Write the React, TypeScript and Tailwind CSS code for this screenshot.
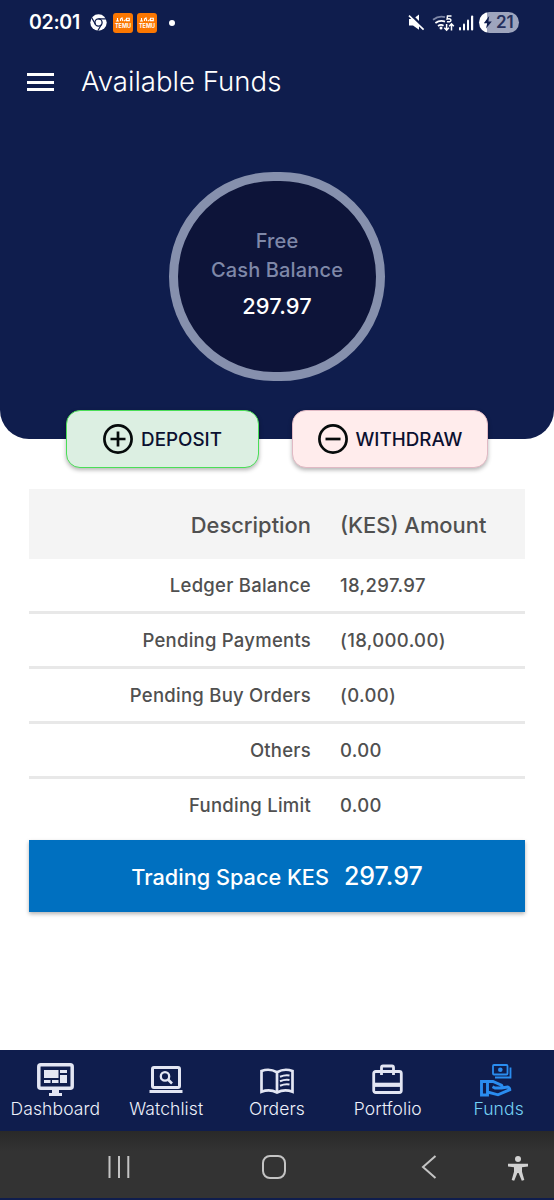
import { ReactNode } from "react";

type Row = { label: string; amount: string };

const rows: Row[] = [
  { label: "Ledger Balance", amount: "18,297.97" },
  { label: "Pending Payments", amount: "(18,000.00)" },
  { label: "Pending Buy Orders", amount: "(0.00)" },
  { label: "Others", amount: "0.00" },
  { label: "Funding Limit", amount: "0.00" },
];

function ChromeIcon() {
  return (
    <svg width="17" height="17" viewBox="0 0 17 17">
      <circle cx="8.5" cy="8.5" r="8.2" fill="#fff" />
      <circle cx="8.5" cy="8.5" r="3.6" fill="#fff" stroke="#0f1d4d" strokeWidth="1.3" />
      <path d="M8.5 4.9h7.6M5.4 10.3L1.8 3.9M11.6 10.3l-3.8 6.4" stroke="#0f1d4d" strokeWidth="1.2" />
    </svg>
  );
}

function TemuIcon() {
  return (
    <div className="flex h-5 w-5 flex-col items-center justify-center rounded-[3px] bg-[#fb7701]">
      <svg width="14" height="5" viewBox="0 0 14 5" stroke="#fff" fill="none" strokeWidth="1.1">
        <path d="M0 4h3M1.5 1v3M4.5 4V2l1.5-1 .8 3M8 4.2L9.8 2.6M10.5 1.2h2.8v2.4h-2.8z" />
      </svg>
      <span className="mt-px text-[5.5px] leading-[6px] font-bold text-white">TEMU</span>
    </div>
  );
}

function StatusBar() {
  return (
    <div className="flex h-[45px] items-center pr-[35px] pl-[29px] text-white">
      <span className="mt-px w-[53px] text-[19.5px] font-semibold tracking-[-0.3px]">02:01</span>
      <div className="ml-2 flex items-center">
        <ChromeIcon />
        <div className="ml-[6px] flex gap-1">
          <TemuIcon />
          <TemuIcon />
        </div>
        <div className="ml-3 h-[6px] w-[6px] rounded-full bg-white" />
      </div>
      <div className="ml-auto flex items-center">
        <svg width="17" height="17" viewBox="0 0 17 17">
          <path d="M1 5h4l6-4.4v15.2L5 11.4H1z" fill="#fff" />
          <path d="M2.2 0l15 15" stroke="#0f1d4d" strokeWidth="2.6" />
          <path d="M1 1.6l14.6 14" stroke="#fff" strokeWidth="1.7" />
        </svg>
        <svg className="ml-[7px]" width="23" height="18" viewBox="0 0 23 18" fill="none">
          <path d="M1 5.8Q7 1.2 13 3.2" stroke="#7f88a8" strokeWidth="1.8" />
          <path d="M3.4 9Q8 5.6 13 7.6" stroke="#fff" strokeWidth="1.8" />
          <path d="M6 12q3-2 5.5-.3" stroke="#fff" strokeWidth="1.8" />
          <circle cx="9" cy="14" r="1.5" fill="#fff" />
          <path d="M19.5 1.9h-4l-.4 3.2q3.8-.9 3.8 1.2 0 2-4 1.4" stroke="#fff" strokeWidth="1.5" />
          <path d="M14.6 10v6M12.3 13.8l2.3 2.4 2.3-2.4M19.5 16.5V10M17.2 12.2l2.3-2.4 2.3 2.4" stroke="#fff" strokeWidth="1.5" />
        </svg>
        <svg className="ml-1" width="15" height="16" viewBox="0 0 15 16" fill="#fff">
          <rect x="0" y="12" width="2" height="3.5" rx="1" />
          <rect x="4" y="8.5" width="2" height="7" rx="1" />
          <rect x="8" y="4.5" width="2" height="11" rx="1" />
          <rect x="12" y="0.5" width="2.2" height="15" rx="1" />
        </svg>
        <div className="ml-[5px] flex h-[21px] w-10 items-center overflow-hidden rounded-full bg-linear-to-r from-white from-20% to-[#9ea5bd] to-20%">
          <svg className="ml-1 shrink-0" width="10" height="13" viewBox="0 0 10 13">
            <path d="M6.2 0L.8 7.2h3.4L3 12.6l5.8-7.2H5.4z" fill="#0f1d4d" />
          </svg>
          <span className="ml-[3px] text-[17px] font-semibold text-[#25305c]">21</span>
        </div>
      </div>
    </div>
  );
}

function Header() {
  return (
    <header className="h-[439px] rounded-b-[29px] bg-[#0f1d4d]">
      <StatusBar />
      <div className="flex h-[74px] items-center pl-[27px]">
        <button className="flex w-[27px] flex-col gap-[4.5px]">
          <span className="h-[3px] bg-white" />
          <span className="h-[3px] bg-white" />
          <span className="h-[3px] bg-white" />
        </button>
        <h1 className="ml-[27px] text-[27.6px] font-light text-white">Available Funds</h1>
      </div>
      <div className="mx-auto mt-[53px] flex h-[209px] w-[216px] flex-col items-center rounded-full border-9 border-[#8690ad] bg-[#0d1439] pt-[46px] text-[20px] leading-[29px] font-medium tracking-[0.15px] text-[#7f88a8]">
        <span>Free</span>
        <span>Cash Balance</span>
        <span className="mt-[7px] text-[21.8px] text-white">297.97</span>
      </div>
    </header>
  );
}

function RoundIcon({ d }: { d: string }) {
  return (
    <svg width="30" height="30" viewBox="0 0 30 30" fill="none" stroke="#060b0b" strokeWidth="2.7">
      <circle cx="15" cy="15" r="13.6" />
      <path d={d} />
    </svg>
  );
}

function Actions() {
  return (
    <div className="relative -mt-[29px] flex h-[58px] justify-between pr-[66px] pl-[66px] text-[18.8px] font-medium text-[#0b1030]">
      <button className="flex w-[193px] items-center justify-center gap-2 rounded-[14px] border border-[#4ade57] bg-[#dcefe2] shadow-[0_2px_4px_rgba(0,0,0,0.3)]">
        <RoundIcon d="M15 7.5v15M7.5 15h15" />
        <span className="pt-[2px]">DEPOSIT</span>
      </button>
      <button className="flex w-[196px] items-center justify-center gap-2 rounded-[14px] border border-[#e0b9c4] bg-[#ffecec] shadow-[0_2px_4px_rgba(0,0,0,0.3)]">
        <RoundIcon d="M7.5 15h15" />
        <span className="pt-[2px]">WITHDRAW</span>
      </button>
    </div>
  );
}

function FundsTable() {
  return (
    <div className="mx-[29px] mt-[21px] font-medium text-[#505050]">
      <div className="flex h-[70px] items-center gap-[29px] bg-[#f4f4f4] pt-[2px] text-[21.9px]">
        <span className="w-[282px] text-right">Description</span>
        <span>(KES) Amount</span>
      </div>
      {rows.map((row) => (
        <div
          key={row.label}
          className="flex h-[55px] items-center gap-[29px] border-b-3 border-[#e8e8e8] pt-[2px] text-[18.5px] tracking-[0.25px] last:border-transparent"
        >
          <span className="w-[282px] text-right">{row.label}</span>
          <span className="tracking-[0.35px]">{row.amount}</span>
        </div>
      ))}
    </div>
  );
}

function NavItem({ label, active, children }: { label: string; active?: boolean; children: ReactNode }) {
  return (
    <a className={active ? "flex flex-col items-center text-[#74d0f4]" : "flex flex-col items-center text-[#eef1fb]"}>
      <div className="flex h-[37px] items-end justify-center">{children}</div>
      <span className="mt-[7px] text-[17.5px] leading-6 font-light tracking-[0.1px]">{label}</span>
    </a>
  );
}

function BottomNav() {
  return (
    <nav className="grid h-[81px] grid-cols-5 bg-[#0f1d4d] pt-[3px]">
      <NavItem label="Dashboard">
        <svg className="-mb-[7px]" width="37" height="34" viewBox="0 0 37 34" fill="#e3e6f3">
          <rect x="1.8" y="1.8" width="33.4" height="23.4" rx="2" fill="none" stroke="#e3e6f3" strokeWidth="3.5" />
          <path d="M7 7h14.5v8H7zM23 7h7v3h-7zM23 12h7v8h-7zM7 17h6.5v3H7zM15 17h6.5v3H15zM15 26h7v4h3v3H12v-3h3z" />
        </svg>
      </NavItem>
      <NavItem label="Watchlist">
        <svg className="-mb-1" width="34" height="29" viewBox="0 0 34 29" fill="none" stroke="#e3e6f3" strokeWidth="3">
          <rect x="3.5" y="2.5" width="27" height="20" rx="1.5" />
          <path d="M.5 26.4h33" />
          <circle cx="16" cy="11.4" r="4.2" strokeWidth="2.3" />
          <path d="M19 14.5l4 4" strokeWidth="2.6" />
        </svg>
      </NavItem>
      <NavItem label="Orders">
        <svg className="-mb-[5px]" width="34" height="27" viewBox="0 0 34 27" fill="none" stroke="#e3e6f3" strokeWidth="2.7">
          <path d="M17 4.2Q9.5 0 1.5 3v20.8Q9.5 20.7 17 24.5Q24.5 20.7 32.5 23.8V3Q24.5 0 17 4.2zM17 4.2v20.3" />
          <path d="M20 8.7q5-2 9.5-1.2M20 13.2q5-2 9.5-1.2M20 17.7q5-2 9.5-1.2" strokeWidth="2" />
        </svg>
      </NavItem>
      <NavItem label="Portfolio">
        <svg className="-mb-1" width="31" height="30" viewBox="0 0 31 30" fill="none" stroke="#e3e6f3" strokeWidth="2.8">
          <rect x="1.7" y="7.5" width="27.6" height="21" rx="2" />
          <path d="M9.5 11V3.5q0-1.5 1.5-1.5h9q1.5 0 1.5 1.5V11" />
          <path d="M2 20.8h27" strokeWidth="4.2" />
        </svg>
      </NavItem>
      <NavItem label="Funds" active>
        <svg className="mr-[5px] -mb-[7px]" width="32" height="34" viewBox="0 0 32 34" fill="none" stroke="#2a8df0" strokeWidth="1.8">
          <rect x="13" y="2" width="14.5" height="9.5" rx="1" />
          <path d="M30.5 4.5v10H15" />
          <circle cx="20.3" cy="6.8" r="2.3" fill="#2a8df0" stroke="none" />
          <path d="M1.5 18.500h6v13.500h-6zM7.500 18.500h5.500l8.500 3.800q1.300 1.500-.5 2.700h-6l-2.500-1.200M21.500 25l6-1q2.300.6 2.300 2.700L18 31.800 7.500 29" strokeWidth="2.9" />
        </svg>
      </NavItem>
    </nav>
  );
}

function SystemNav() {
  return (
    <div className="flex h-[67px] items-center bg-linear-to-b from-[#292929] to-[#333333] to-30% pt-[4px]">
      <svg className="ml-[108px]" width="22" height="22" viewBox="0 0 22 22" stroke="#c4c4c4" strokeWidth="2">
        <path d="M1.5 0v22M11 0v22M20.3 0v22" />
      </svg>
      <div className="ml-[132px] h-6 w-6 rounded-[8px] border-2 border-[#c4c4c4]" />
      <svg className="ml-[135px]" width="16" height="24" viewBox="0 0 16 24" fill="none" stroke="#c4c4c4" strokeWidth="2">
        <path d="M14.5 1L2 12l12.5 11" />
      </svg>
      <svg className="mt-1 ml-[71px]" width="20" height="25" viewBox="0 0 20 25" fill="#d2d2d2">
        <circle cx="10" cy="3" r="3" />
        <path d="M0 7.8h20v2.6l-6 .8v4.5l2.3 8.3-2.5.8L10.600 17H9.400l-3.200 7.800-2.500-.8L6 15.700v-4.500l-6-.8z" />
      </svg>
    </div>
  );
}

function App() {
  return (
    <div className="flex h-[1200px] w-[554px] flex-col overflow-hidden bg-white font-['Inter',sans-serif]">
      <Header />
      <Actions />
      <FundsTable />
      <div className="mx-[29px] mt-[6px] flex h-[72px] items-baseline justify-center gap-[15px] bg-[#0070c0] pt-[18px] font-medium text-white shadow-[0_2px_4px_rgba(0,0,0,0.3)]">
        <span className="text-[21.7px]">Trading Space KES</span>
        <span className="text-[25px]">297.97</span>
      </div>
      <div className="mt-auto">
        <BottomNav />
        <SystemNav />
        <div className="h-[2px] bg-[#0f1d4d]" />
      </div>
    </div>
  );
}

export default App;
